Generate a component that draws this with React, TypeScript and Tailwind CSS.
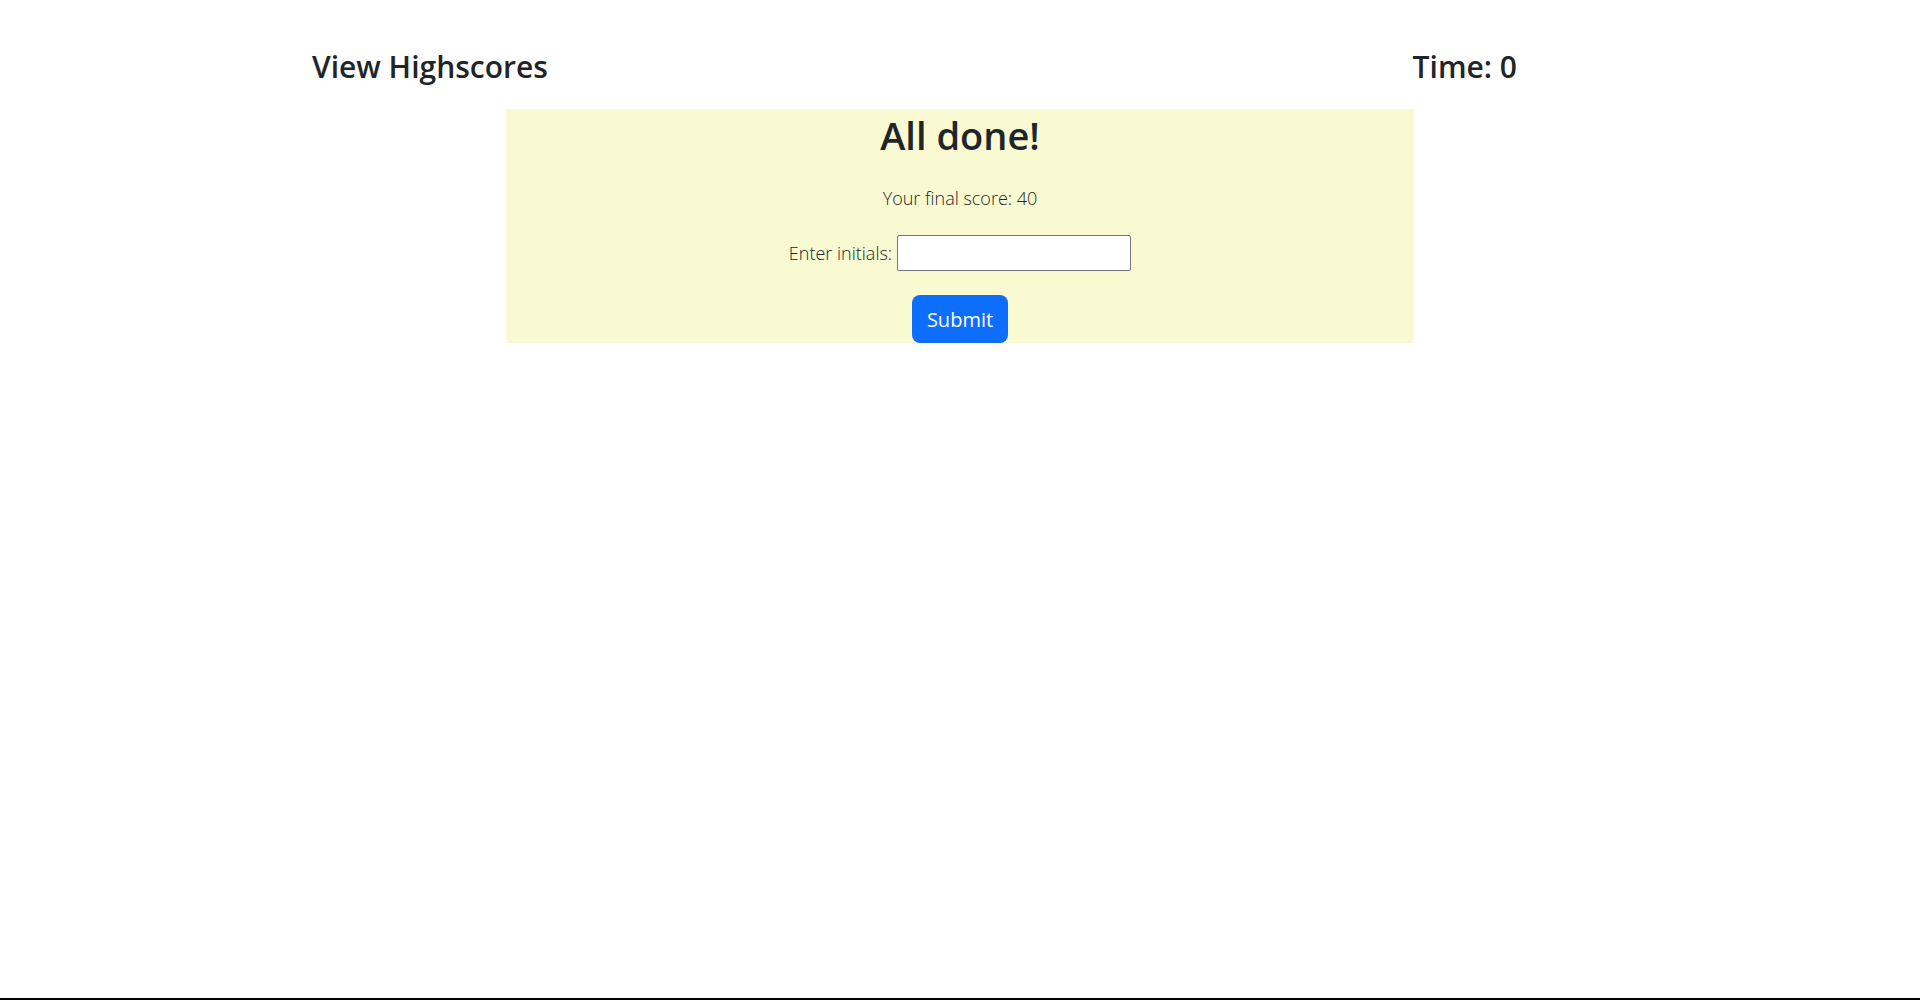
import React from 'react';

const FONT = { fontFamily: '"Open Sans", "Noto Sans", Arial, sans-serif' };

export default function App() {
  return (
    <div
      className="h-[1000px] bg-white border-b-2 border-black text-[#212529]"
      style={FONT}
    >
      {/* header */}
      <div className="pt-[48px] ml-[312px] w-[1205px] flex justify-between items-start">
        <h2 className="text-[30px] leading-[38px] font-semibold">View Highscores</h2>
        <h2 className="text-[30px] leading-[38px] font-semibold">Time: 0</h2>
      </div>

      {/* end screen */}
      <div className="mt-[23px] mx-auto w-[908px] h-[234px] pt-[2px] bg-[#fafad2] flex flex-col items-center">
        <h1 className="text-[38px] leading-[48px] font-semibold">All done!</h1>
        <p className="mt-[24px] text-[18px] leading-[30px] font-light">Your final score: 40</p>
        <div className="mt-[22px] flex items-center gap-[5px]">
          <label htmlFor="initials" className="text-[18px] font-light">Enter initials:</label>
          <input
            id="initials"
            type="text"
            className="w-[234px] h-[36px] bg-white border border-[#767676] rounded-[2px] px-2 text-[16px] outline-none"
          />
        </div>
        <button className="mt-[24px] h-[48px] px-[15px] pt-[2px] rounded-lg bg-[#0d6efd] text-white text-[20px] leading-[30px]">
          Submit
        </button>
      </div>
    </div>
  );
}
